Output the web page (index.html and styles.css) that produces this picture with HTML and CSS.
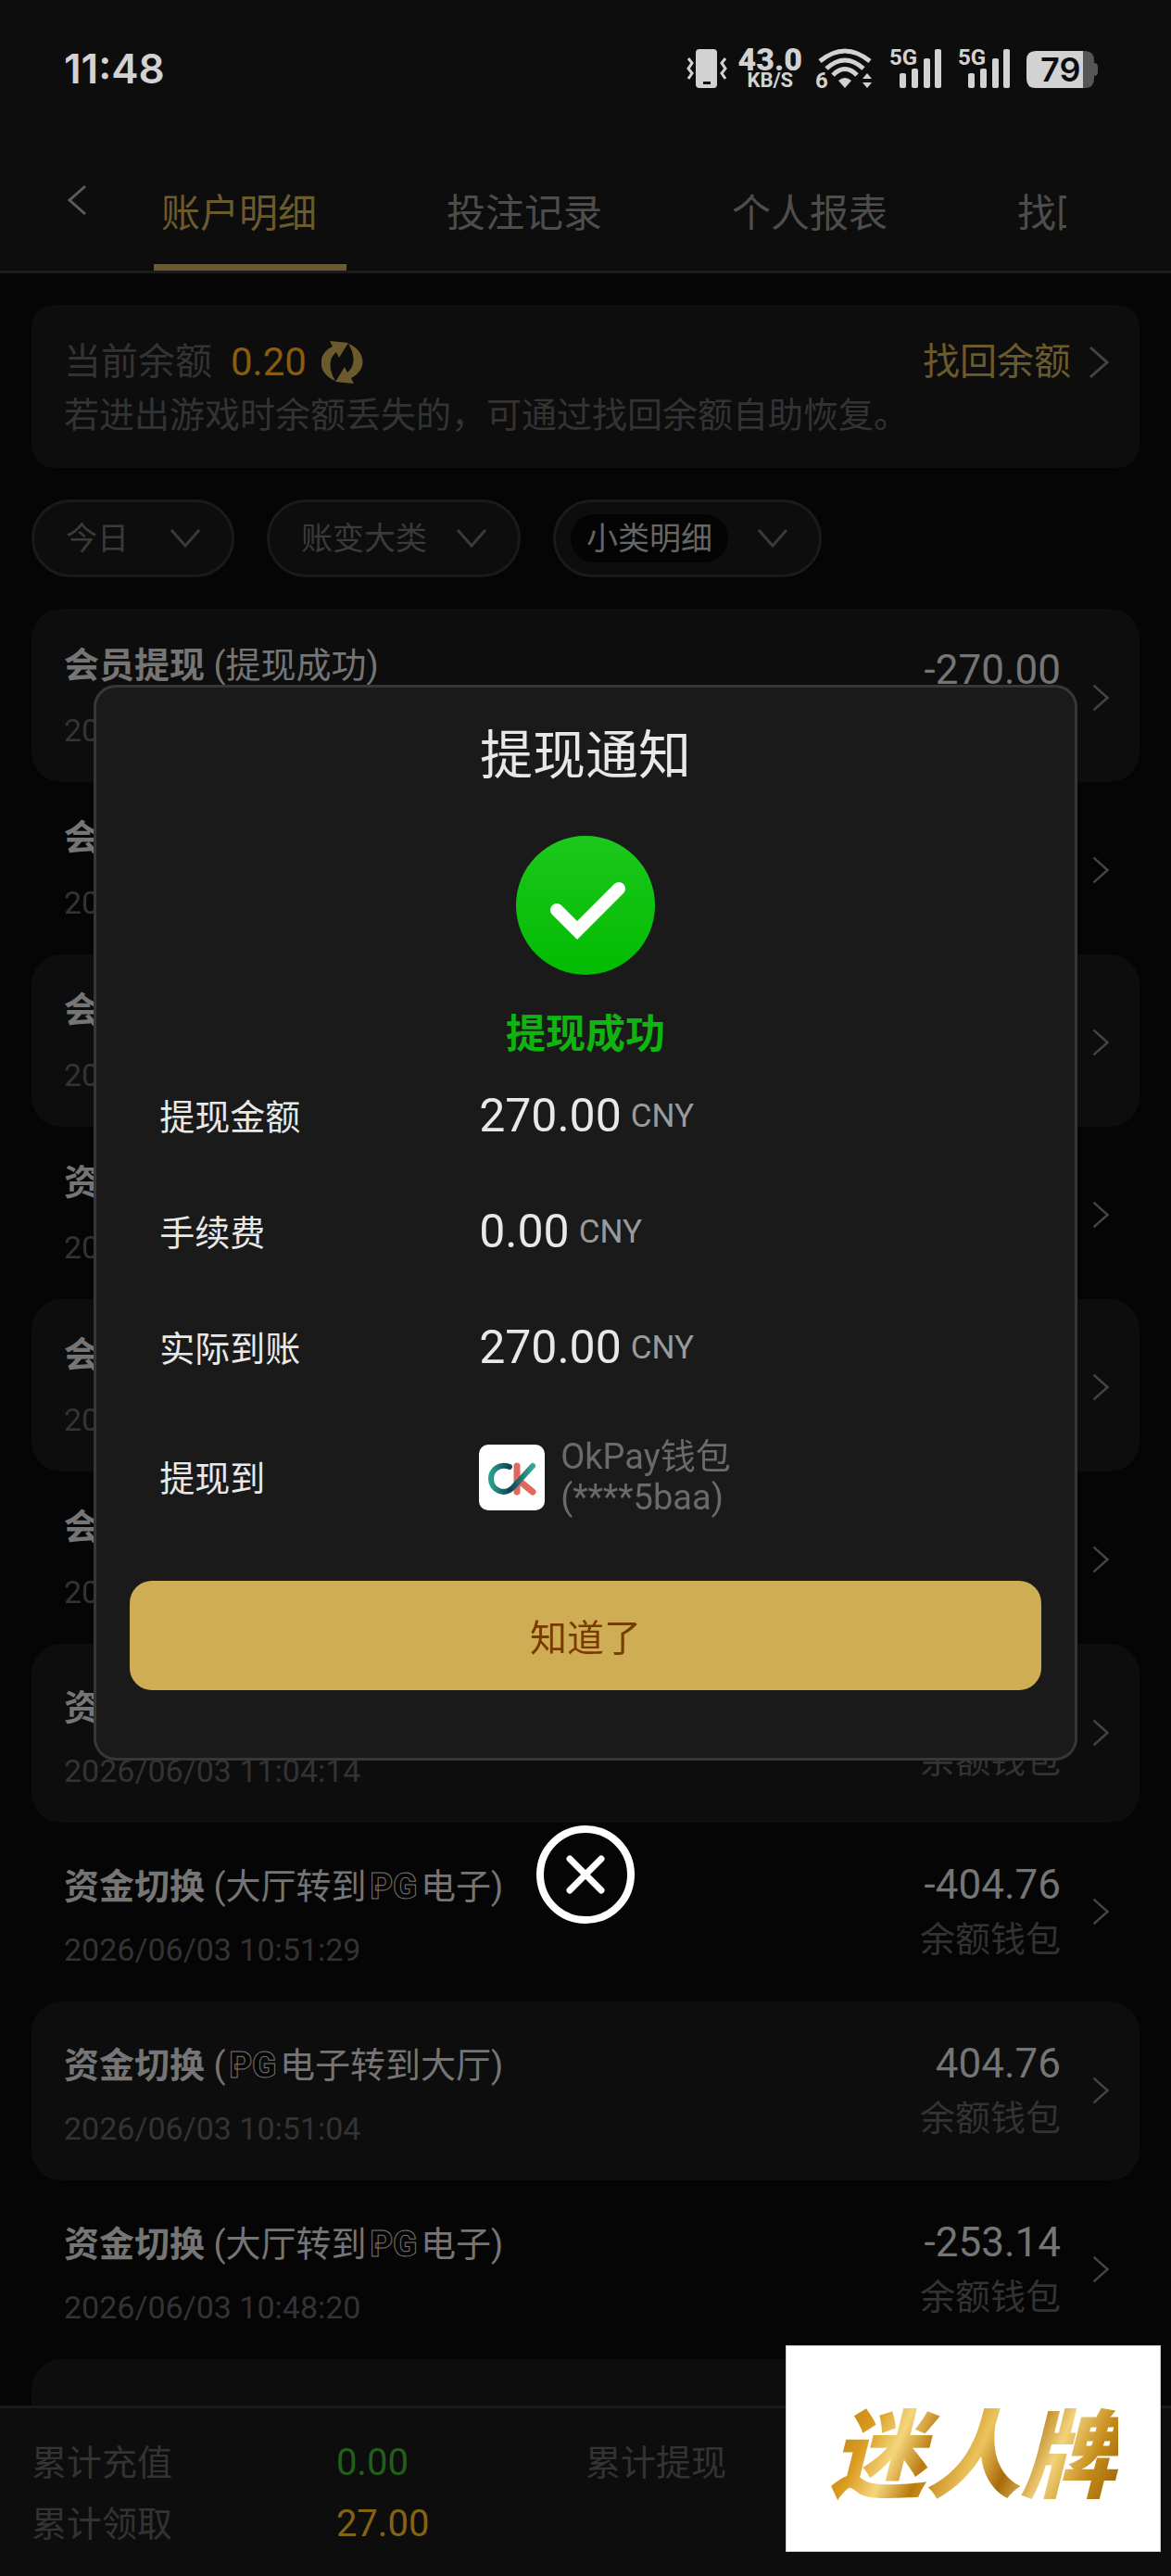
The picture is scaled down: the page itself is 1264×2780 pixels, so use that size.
FILE: index.html
```html
<!DOCTYPE html>
<html lang="zh-CN">
    <head>
        <meta charset="UTF-8">
        <meta name="viewport" content="width=device-width, initial-scale=1.0">
        <title>账户明细</title>
        <link rel="stylesheet" href="styles.css">
    </head>
    <body>
        <svg width="0" height="0" class="defs" aria-hidden="true">
            <symbol id="right" viewBox="0 0 24 36"><path d="M3 2L21 18L3 34" fill="none" stroke="currentColor" stroke-width="3"/></symbol>
            <symbol id="down" viewBox="0 0 34 22"><path d="M2 2L17 19L32 2" fill="none" stroke="currentColor" stroke-width="3"/></symbol>
        </svg>

        <div class="app">
            <header class="header">
                <div class="status">
                    <span class="clock">11:48</span>
                    <div class="status-icons">
                        <svg class="vibrate" width="44" height="44" viewBox="0 0 44 44">
                            <rect x="10" y="1" width="23" height="42" rx="4" fill="#d2d2d2"/>
                            <rect x="18" y="36" width="8" height="3" fill="#0d0d0d"/>
                            <path d="M2 11L6 16L2 22L6 27L2 33M42 11L38 16L42 22L38 27L42 33" fill="none" stroke="#d2d2d2" stroke-width="3"/>
                        </svg>
                        <div class="speed"><b>43.0</b><span>KB/S</span></div>
                        <svg class="wifi" width="64" height="44" viewBox="0 0 64 44">
                            <g fill="none" stroke="#d2d2d2" stroke-width="5">
                                <path d="M5 14Q32 -8 59 14"/>
                                <path d="M12 22Q32 4 52 22"/>
                                <path d="M19 29Q32 16 45 29"/>
                            </g>
                            <path d="M25 35Q32 29 39 35L32 43Z" fill="#d2d2d2"/>
                            <path d="M51 33L56 27L61 33ZM51 37L56 43L61 37Z" fill="#d2d2d2"/>
                            <text x="0" y="43" class="tiny">6</text>
                        </svg>
                        <svg class="signal" width="58" height="44" viewBox="0 0 58 44">
                            <text x="0" y="18" class="tiny">5G</text>
                            <g fill="#d2d2d2"><rect x="11" y="27" width="7" height="16" rx="2"/><rect x="24" y="22" width="7" height="21" rx="2"/><rect x="37" y="11" width="7" height="32" rx="2"/><rect x="49" y="1" width="7" height="42" rx="2"/></g>
                        </svg>
                        <svg class="signal" width="58" height="44" viewBox="0 0 58 44">
                            <text x="0" y="18" class="tiny">5G</text>
                            <g fill="#d2d2d2"><rect x="11" y="27" width="7" height="16" rx="2"/><rect x="24" y="22" width="7" height="21" rx="2"/><rect x="37" y="11" width="7" height="32" rx="2"/><rect x="49" y="1" width="7" height="42" rx="2"/></g>
                        </svg>
                        <svg width="78" height="44" viewBox="0 0 78 44">
                            <path d="M61 3H63Q73 3 73 13V16Q77 16 77 20V26Q77 30 73 30V33Q73 43 63 43H61Z" fill="#565656"/>
                            <path d="M61 3H10Q0 3 0 13V33Q0 43 10 43H61Z" fill="#d2d2d2"/>
                            <text x="15" y="36" class="percent">79</text>
                        </svg>
                    </div>
                </div>
                <div class="nav">
                    <button class="back" aria-label="返回"><svg width="22" height="34" viewBox="0 0 22 34"><path d="M20 2L3 17L20 32" fill="none" stroke="#5c5c5c" stroke-width="3"/></svg></button>
                    <nav class="tabs">
                        <a href="#" class="tab active">账户明细</a>
                        <a href="#" class="tab">投注记录</a>
                        <a href="#" class="tab">个人报表</a>
                        <a href="#" class="tab">找回余额</a>
                    </nav>
                </div>
            </header>

            <main class="main">
                <section class="balance">
                    <div class="balance-row">
                        <span class="balance-label">当前余额</span>
                        <span class="balance-value">0.20</span>
                        <button class="refresh" aria-label="刷新">
                            <svg width="46" height="46" viewBox="0 0 46 46" fill="#6b5a2c">
                                <path id="arrow" d="M9 0L29 2L19 18L16 12C7 19 8 32 15 43C-4 36 -6 14 12 6Z"/>
                                <use href="#arrow" transform="rotate(180 22 23)"/>
                            </svg>
                        </button>
                        <a href="#" class="recover">找回余额<svg width="24" height="40"><use href="#right"/></svg></a>
                    </div>
                    <p class="hint">若进出游戏时余额丢失的，可通过找回余额自助恢复。</p>
                </section>

                <div class="filters">
                    <label class="filter"><select aria-label="日期"><option>今日</option></select><svg width="34" height="22"><use href="#down"/></svg></label>
                    <label class="filter"><select aria-label="账变大类"><option>账变大类</option></select><svg width="34" height="22"><use href="#down"/></svg></label>
                    <label class="filter picked"><select aria-label="小类明细"><option>小类明细</option></select><svg width="34" height="22"><use href="#down"/></svg></label>
                </div>

                <ul class="records">
                    <li class="record">
                        <div class="info"><p class="name"><b>会员提现</b> (提现成功)</p><time>2026/06/03</time></div>
                        <div class="sum"><p class="amount">-270.00</p><p class="wallet"></p></div>
                        <svg class="go" width="20" height="32"><use href="#right"/></svg>
                    </li>
                    <li class="record">
                        <div class="info"><p class="name"><b>会员提现</b></p><time>2026/06/03</time></div>
                        <svg class="go" width="20" height="32"><use href="#right"/></svg>
                    </li>
                    <li class="record">
                        <div class="info"><p class="name"><b>会员提现</b></p><time>2026/06/03</time></div>
                        <svg class="go" width="20" height="32"><use href="#right"/></svg>
                    </li>
                    <li class="record">
                        <div class="info"><p class="name"><b>资金切换</b></p><time>2026/06/03</time></div>
                        <svg class="go" width="20" height="32"><use href="#right"/></svg>
                    </li>
                    <li class="record">
                        <div class="info"><p class="name"><b>会员提现</b></p><time>2026/06/03</time></div>
                        <svg class="go" width="20" height="32"><use href="#right"/></svg>
                    </li>
                    <li class="record">
                        <div class="info"><p class="name"><b>会员提现</b></p><time>2026/06/03</time></div>
                        <svg class="go" width="20" height="32"><use href="#right"/></svg>
                    </li>
                    <li class="record transfer">
                        <div class="info"><p class="name"><b>资金切换</b></p><time>2026/06/03 11:04:14</time></div>
                        <div class="sum"><p class="amount"></p><p class="wallet">余额钱包</p></div>
                        <svg class="go" width="20" height="32"><use href="#right"/></svg>
                    </li>
                    <li class="record transfer">
                        <div class="info"><p class="name"><b>资金切换</b> (大厅转到<span class="pg">PG</span>电子)</p><time>2026/06/03 10:51:29</time></div>
                        <div class="sum"><p class="amount">-404.76</p><p class="wallet">余额钱包</p></div>
                        <svg class="go" width="20" height="32"><use href="#right"/></svg>
                    </li>
                    <li class="record transfer">
                        <div class="info"><p class="name"><b>资金切换</b> (<span class="pg">PG</span>电子转到大厅)</p><time>2026/06/03 10:51:04</time></div>
                        <div class="sum"><p class="amount">404.76</p><p class="wallet">余额钱包</p></div>
                        <svg class="go" width="20" height="32"><use href="#right"/></svg>
                    </li>
                    <li class="record transfer">
                        <div class="info"><p class="name"><b>资金切换</b> (大厅转到<span class="pg">PG</span>电子)</p><time>2026/06/03 10:48:20</time></div>
                        <div class="sum"><p class="amount">-253.14</p><p class="wallet">余额钱包</p></div>
                        <svg class="go" width="20" height="32"><use href="#right"/></svg>
                    </li>
                    <li class="record transfer"></li>
                </ul>
            </main>

            <footer class="totals">
                <span>累计充值</span><span class="num green">0.00</span>
                <span>累计提现</span><span></span>
                <span>累计领取</span><span class="num yellow">27.00</span>
            </footer>
        </div>

        <div class="overlay">
            <div class="modal" role="dialog" aria-labelledby="modalTitle">
                <h1 id="modalTitle">提现通知</h1>
                <svg class="check" width="150" height="150" viewBox="0 0 150 150">
                    <defs><linearGradient id="green" x1="0" y1="0" x2="0" y2="1"><stop offset="0" stop-color="#1cc81c"/><stop offset="1" stop-color="#02bb02"/></linearGradient></defs>
                    <circle cx="75" cy="75" r="75" fill="url(#green)"/>
                    <path d="M44 80L66 102L111 57" fill="none" stroke="#fff" stroke-width="14" stroke-linecap="round"/>
                </svg>
                <p class="result">提现成功</p>
                <dl class="details">
                    <div><dt>提现金额</dt><dd>270.00<small>CNY</small></dd></div>
                    <div><dt>手续费</dt><dd>0.00<small>CNY</small></dd></div>
                    <div><dt>实际到账</dt><dd>270.00<small>CNY</small></dd></div>
                    <div class="target">
                        <dt>提现到</dt>
                        <dd>
                            <svg width="71" height="71" viewBox="0 0 71 71">
                                <defs><linearGradient id="teal" x1="0" y1="0" x2="1" y2="0"><stop offset="0" stop-color="#2aa08c"/><stop offset=".45" stop-color="#0f4257"/><stop offset="1" stop-color="#35ab93"/></linearGradient></defs>
                                <rect width="71" height="71" rx="10" fill="#fff"/>
                                <path d="M41 23V51M47 42L58 51" stroke="#e0685c" stroke-width="7" stroke-linecap="round"/>
                                <path d="M33 24C22 20 13 27 13 37C13 49 27 56 37 46L58 23" fill="none" stroke="url(#teal)" stroke-width="6" stroke-linecap="round"/>
                            </svg>
                            <span>OkPay钱包<br>(****5baa)</span>
                        </dd>
                    </div>
                </dl>
                <button class="ok">知道了</button>
            </div>
            <button class="close" aria-label="关闭">
                <svg width="106" height="106" viewBox="0 0 106 106" fill="none" stroke="#fff">
                    <circle cx="53" cy="53" r="49" stroke-width="8"/>
                    <path d="M36 36L70 70M70 36L36 70" stroke-width="7" stroke-linecap="round"/>
                </svg>
            </button>
        </div>

        <div class="watermark"><span>迷人牌</span></div>
    </body>
</html>
```
FILE: styles.css
```css
* {
    box-sizing: border-box;
    margin: 0;
    padding: 0;
}

body {
    font-family: Roboto, "Noto Sans CJK SC", sans-serif;
    font-size: 38px;
    background: #050505;
    color: #757575;
}

button, select {
    font: inherit;
    color: inherit;
    background: none;
    border: none;
    appearance: none;
}

a {
    color: inherit;
    text-decoration: none;
}

ul {
    list-style: none;
}

.defs {
    display: block;
}

.app {
    height: 100vh;
    display: flex;
    flex-direction: column;
}

/* header */
.header {
    background: #0d0d0d;
    border-bottom: 3px solid #1c1c1c;
}

.status {
    height: 148px;
    padding: 0 78px 0 69px;
    display: flex;
    align-items: center;
    justify-content: space-between;
    color: #d2d2d2;
}

.clock {
    font-family: Inter, sans-serif;
    font-size: 44px;
    font-weight: 600;
}

.status-icons {
    display: flex;
    align-items: center;
}

.status-icons svg {
    overflow: visible;
}

.speed {
    display: flex;
    flex-direction: column;
    align-items: center;
    margin: 0 14px 0 12px;
    font-size: 22px;
    line-height: 20px;
    font-weight: 700;
}

.speed b {
    font-size: 34px;
    line-height: 26px;
}

.wifi, .signal {
    margin-right: 16px;
}

.tiny {
    font-size: 24px;
    font-weight: 700;
    fill: #d2d2d2;
}

.percent {
    font-family: Inter, sans-serif;
    font-size: 36px;
    font-weight: 600;
    fill: #0d0d0d;
}

.nav {
    height: 144px;
    display: flex;
    align-items: flex-end;
}

.back {
    width: 166px;
    height: 144px;
    padding-left: 72px;
    text-align: left;
}

.tabs {
    flex: 1;
    margin-right: 113px;
    display: flex;
    gap: 100px;
    overflow: hidden;
}

.tab {
    flex: none;
    width: 208px;
    padding: 4px 0 0 8px;
    font-size: 42px;
    line-height: 122px;
    color: #4d4d4d;
}

.tab.active {
    color: #6b5a2c;
    box-shadow: inset 0 -7px #6b5a2c;
}

/* content */
.main {
    flex: 1;
    min-height: 0;
    overflow: hidden;
    padding: 34px 34px 0;
}

.balance {
    padding: 36px 32px 30px 35px;
    border-radius: 24px;
    background: #0d0d0d;
    color: #333;
}

.balance-row {
    display: flex;
    align-items: center;
    font-size: 40px;
    line-height: 52px;
}

.balance-value {
    margin-left: 20px;
    font-size: 42px;
    color: #8a5c12;
}

.refresh {
    display: flex;
    margin-left: 16px;
}

.recover {
    margin-left: auto;
    display: flex;
    align-items: center;
    gap: 18px;
    color: #6b5a2c;
}

.recover svg {
    color: #444;
}

.hint {
    padding-top: 4px;
    line-height: 54px;
}

.filters {
    display: flex;
    gap: 35px;
    margin: 34px 0;
}

.filter {
    height: 84px;
    padding: 0 33px 0 34px;
    display: flex;
    align-items: center;
    gap: 31px;
    border: 3px solid #1a1a1a;
    border-radius: 42px;
    background: #0d0d0d;
    color: #3a3a3a;
}

.filter:first-child {
    gap: 44px;
}

.filter select {
    font-size: 34px;
    line-height: 52px;
}

.picked {
    padding-left: 16px;
}

.picked select {
    padding: 0 17px;
    border-radius: 26px;
    background: #040404;
    color: #666;
}

.record {
    padding: 40px 32px 36px 35px;
    display: flex;
    align-items: center;
    min-height: 186px;
    border-radius: 32px;
}

.record:nth-child(odd) {
    background: #0d0d0d;
}

.info {
    flex: 1;
    display: flex;
    flex-direction: column;
    gap: 30px;
    line-height: 40px;
}

.info time {
    font-size: 34px;
    color: #333;
}

.transfer {
    min-height: 193px;
    padding-top: 49px;
    padding-bottom: 36px;
}

.transfer .info {
    gap: 28px;
}

.transfer .sum,
.transfer .go {
    margin-top: -14px;
}

.pg {
    margin: 0 4px;
    font-weight: 900;
    color: #050505;
    -webkit-text-stroke: 1px #757575;
}

.sum {
    text-align: right;
    line-height: 52px;
}

.amount {
    min-height: 52px;
    margin-bottom: 7px;
    font-size: 44px;
}

.wallet {
    min-height: 52px;
    color: #333;
}

.go {
    margin-left: 33px;
    color: #444;
}

/* bottom totals */
.totals {
    height: 184px;
    padding: 26px 34px 0;
    display: grid;
    grid-template-columns: 11fr 9fr 11fr 9fr;
    grid-auto-rows: 66px;
    line-height: 66px;
    border-top: 3px solid #1a1a1a;
    background: #0d0d0d;
    color: #333;
}

.num {
    font-size: 40px;
}

.green {
    color: #22601a;
}

.yellow {
    color: #836314;
}

/* withdrawal notice */
.overlay {
    position: fixed;
    inset: 0;
    padding-top: 34px;
    display: flex;
    flex-direction: column;
    align-items: center;
    justify-content: center;
    gap: 70px;
}

.modal {
    width: 84%;
    padding: 39px 36px 73px;
    display: flex;
    flex-direction: column;
    align-items: center;
    border: 3px solid #373737;
    border-radius: 24px;
    background: #1a1a1a;
    color: #e8e8e8;
}

.modal h1 {
    font-size: 57px;
    line-height: 70px;
    font-weight: 400;
}

.check {
    margin: 51px 0 38px;
}

.result {
    font-size: 43px;
    line-height: 52px;
    font-weight: 700;
    color: #10b410;
}

.details {
    align-self: stretch;
    margin-left: 32px;
}

.details > div {
    height: 125px;
    display: grid;
    grid-template-columns: 345px 1fr;
    align-items: center;
}

.details dt {
    margin-bottom: 4px;
}

.details dd {
    display: flex;
    align-items: center;
    font-size: 50px;
}

.details small {
    margin-left: 10px;
    font-size: 35px;
    color: #9a9a9a;
}

.details .target {
    height: 155px;
}

.target span {
    margin-left: 17px;
    font-size: 38px;
    line-height: 44px;
    color: #6a6a6a;
}

.ok {
    align-self: stretch;
    height: 118px;
    margin-top: 34px;
    border-radius: 24px;
    background: #cfad55;
    color: #7a3a00;
    font-size: 40px;
}

.close {
    display: flex;
}

.watermark {
    position: fixed;
    right: 11px;
    bottom: 26px;
    padding: 36px 45px;
    border: 1px solid #ccc;
    background: #fff;
}

.watermark span {
    display: block;
    padding: 0 2px;
    font-family: "Noto Sans CJK SC", sans-serif;
    font-size: 103px;
    line-height: 149px;
    font-weight: 900;
    font-style: italic;
    color: transparent;
    background: linear-gradient(115deg, #a8720f, #d99a1e 18%, #f5d67c 28%, #b97a0d 38%, #ecc45c 52%, #a96a0a 62%, #f3d27a 74%, #c48a18 86%, #8f5a06);
    -webkit-background-clip: text;
    background-clip: text;
}
```
